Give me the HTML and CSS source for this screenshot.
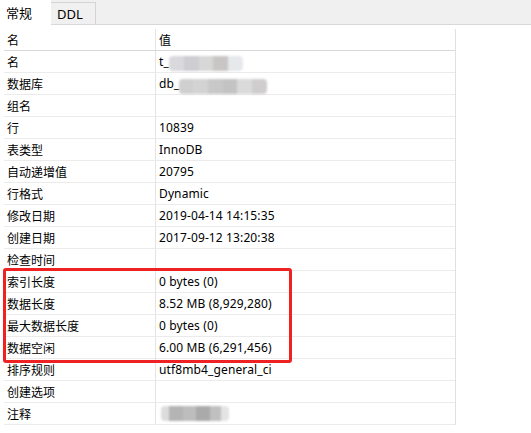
FILE: index.html
```html
<!DOCTYPE html>
<html lang="zh">
<head>
<meta charset="utf-8">
<link rel="stylesheet" href="styles.css">
</head>
<body>
<div class="tabbar">
  <div class="tab active">常规</div>
  <div class="tab">DDL</div>
</div>
<div class="content">
  <div class="grid">
    <div class="row head"><div class="k">名</div><div class="v">值</div></div>
    <div class="row"><div class="k">名</div><div class="v">t_<span class="mosaic m1"></span></div></div>
    <div class="row"><div class="k">数据库</div><div class="v">db_<span class="mosaic m2"></span></div></div>
    <div class="row"><div class="k">组名</div><div class="v"></div></div>
    <div class="row"><div class="k">行</div><div class="v">10839</div></div>
    <div class="row"><div class="k">表类型</div><div class="v">InnoDB</div></div>
    <div class="row"><div class="k">自动递增值</div><div class="v">20795</div></div>
    <div class="row"><div class="k">行格式</div><div class="v">Dynamic</div></div>
    <div class="row"><div class="k">修改日期</div><div class="v">2019-04-14 14:15:35</div></div>
    <div class="row"><div class="k">创建日期</div><div class="v">2017-09-12 13:20:38</div></div>
    <div class="row"><div class="k">检查时间</div><div class="v"></div></div>
    <div class="row"><div class="k">索引长度</div><div class="v">0 bytes (0)</div></div>
    <div class="row"><div class="k">数据长度</div><div class="v">8.52 MB (8,929,280)</div></div>
    <div class="row"><div class="k">最大数据长度</div><div class="v">0 bytes (0)</div></div>
    <div class="row"><div class="k">数据空闲</div><div class="v">6.00 MB (6,291,456)</div></div>
    <div class="row"><div class="k">排序规则</div><div class="v">utf8mb4_general_ci</div></div>
    <div class="row"><div class="k">创建选项</div><div class="v"></div></div>
    <div class="row"><div class="k">注释</div><div class="v"><span class="mosaic m3"></span></div></div>
  </div>
  <div class="highlight"></div>
</div>
</body>
</html>
```

FILE: styles.css
```css
html, body {
  margin: 0;
  padding: 0;
  background: #ffffff;
}
body {
  font-family: "Noto Sans", "Noto Sans CJK SC", sans-serif;
  font-size: 12px;
  color: #000;
  width: 531px;
  height: 433px;
  overflow: hidden;
}
.tabbar {
  display: flex;
  align-items: flex-end;
  height: 24px;
  background: #f0f0f0;
  border-bottom: 1px solid #d8d8d8;
  position: relative;
}
.tab {
  box-sizing: border-box;
  height: 22px;
  padding: 0 6px;
  display: flex;
  align-items: center;
  border: 1px solid #d4d4d4;
  border-bottom: none;
  font-size: 13px;
}
.tab + .tab {
  border-left: none;
  width: 45px;
}
.tab.active {
  background: #ffffff;
  height: 25px;
  width: 51px;
  margin-bottom: -1px;
  border: none;
  padding-left: 6px;
}
.content {
  position: relative;
  padding: 4px 0 0 4px;
}
.grid {
  width: 452px;
  border-right: 1px solid #e0e0e0;
  box-sizing: border-box;
}
.row {
  display: grid;
  grid-template-columns: 151px 1fr;
  height: 22px;
  box-sizing: border-box;
  border-bottom: 1px solid #ebebeb;
}
.row.head {
  border-bottom: 1px solid #d9d9d9;
}
.k, .v {
  display: flex;
  align-items: center;
  padding-left: 3px;
  white-space: nowrap;
}
.v {
  border-left: 1px solid #e4e4e4;
  padding-left: 3px;
  letter-spacing: 0.12px;
}
.mosaic {
  display: inline-block;
  height: 15px;
  border-radius: 4px;
  filter: blur(1.2px);
}
.m1 {
  width: 74px;
  background: linear-gradient(90deg, #d9d9dc 0 20%, #cdcdd2 20% 40%, #d7d7d7 40% 60%, #c9c5c5 60% 80%, #e6e8ec 80% 100%);
  margin-top: 4px;
}
.m2 {
  width: 88px;
  background: linear-gradient(90deg, #cfcfcf 0 16%, #d3d3d3 16% 33%, #c8c8c8 33% 50%, #c3c3c3 50% 66%, #dadada 66% 83%, #cfcdcd 83% 100%);
  margin-top: 6px;
}
.m3 {
  width: 68px;
  margin-left: 2px;
  background: linear-gradient(90deg, #dcdcdc 0 12%, #b4b4b4 12% 32%, #bdbdbd 32% 52%, #aaaaaa 52% 72%, #c0c0c0 72% 88%, #e4e4e4 88% 100%);
}
.highlight {
  position: absolute;
  left: 3px;
  top: 243px;
  width: 283px;
  height: 89px;
  border: 3px solid #ee2222;
  border-radius: 3px;
}
```
